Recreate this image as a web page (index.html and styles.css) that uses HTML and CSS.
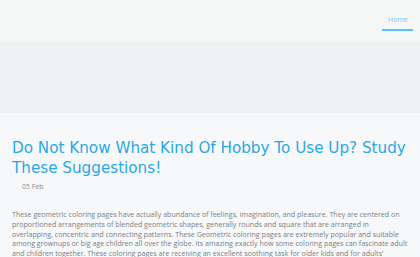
FILE: index.html
```html
<!DOCTYPE html>
<html lang="en">
<head>
  <meta charset="UTF-8" />
  <title>Hobby Suggestions</title>
  <link rel="stylesheet" href="styles.css">
</head>
<body>
  <header class="site-header">
    <nav class="main-nav">
      <a href="#" class="nav-link active">Home</a>
    </nav>
  </header>

  <div class="banner"></div>

  <main class="post">
    <h1 class="post-title">Do Not Know What Kind Of Hobby To Use Up? Study These Suggestions!</h1>
    <div class="post-date">05 Feb</div>
    <p class="post-body">These geometric coloring pages have actually abundance of feelings, imagination, and pleasure. They are centered on proportioned arrangements of blended geometric shapes, generally rounds and square that are arranged in overlapping, concentric and connecting patterns. These Geometric coloring pages are extremely popular and suitable among grownups or big age children all over the globe. Its amazing exactly how some coloring pages can fascinate adult and children together. These coloring pages are receiving an excellent soothing task for older kids and for adults' relaxation.</p>
  </main>
</body>
</html>
```

FILE: styles.css
```css
body {
  margin: 0;
  font-family: 'Open Sans', 'Liberation Sans', sans-serif;
  background-color: #f7f8f9;
  overflow: hidden;
}

.site-header {
  height: 42px;
  background-color: #f5f7f7;
  display: flex;
  justify-content: flex-end;
}

.main-nav {
  display: flex;
  padding-right: 7px;
}

.nav-link {
  display: block;
  font-size: 7px;
  color: #7cc8f0;
  text-decoration: none;
  padding: 15px 6px 0;
  height: 14px;
  width: 19px;
  text-align: center;
  border-bottom: 2px solid #5bc0f5;
}

.banner {
  height: 71px;
  background-color: #eff1f3;
}

.post {
  padding: 25px 10px 0 12px;
}

.post-title {
  font-family: 'DejaVu Sans', sans-serif;
  font-weight: normal;
  font-size: 15.2px;
  line-height: 20px;
  color: #29a8e8;
  margin: 0;
}

.post-date {
  font-size: 7px;
  color: #8a8f95;
  margin: 4px 0 0 10px;
}

.post-body {
  font-size: 7.1px;
  line-height: 9.8px;
  color: #7b8188;
  margin: 19px 0 0;
}
```
